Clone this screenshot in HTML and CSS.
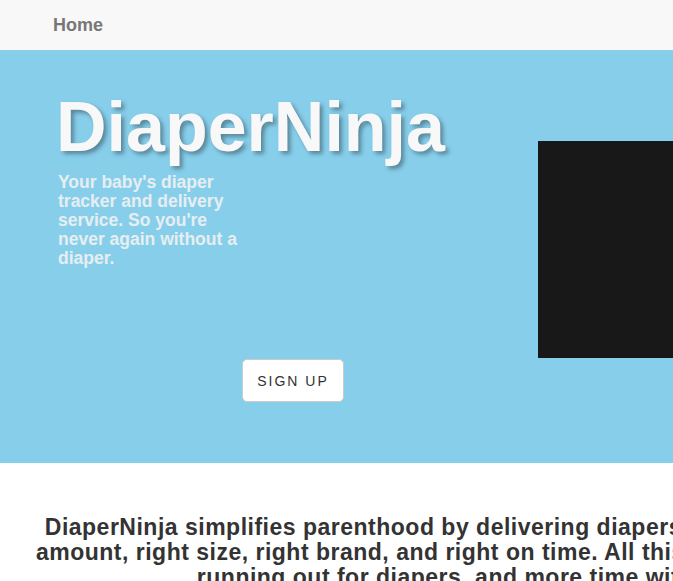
FILE: index.html
```html
<!DOCTYPE html>
<html lang="en">
<head>
<meta charset="utf-8">
<title>DiaperNinja</title>
<link rel="stylesheet" href="styles.css">
</head>
<body>
<nav class="navbar">
  <a class="brand" href="#">Home</a>
</nav>
<header class="hero">
  <div class="hero-text">
    <h1 class="title">DiaperNinja</h1>
    <p class="tagline">Your baby's diaper tracker and delivery service. So you're never again without a diaper.</p>
    <a class="btn" href="#">SIGN UP</a>
  </div>
  <div class="hero-media"></div>
</header>
<section class="intro">
  <p class="intro-text">DiaperNinja simplifies parenthood by delivering diapers to your home in the right<br>amount, right size, right brand, and right on time. All this ensures less time wasted<br>running out for diapers, and more time with your baby.</p>
</section>
</body>
</html>
```
FILE: styles.css
```css
html, body {
  margin: 0;
  padding: 0;
}
body {
  font-family: "Liberation Sans", Arial, Helvetica, sans-serif;
  background: #ffffff;
  overflow-x: hidden;
  width: 673px;
}
.navbar {
  height: 50px;
  background: #f8f8f8;
  display: flex;
  align-items: center;
  padding-left: 53px;
}
.brand {
  color: #777777;
  font-weight: bold;
  font-size: 18px;
  text-decoration: none;
}
.hero {
  background: #87ceeb;
  height: 413px;
  display: flex;
  overflow: hidden;
}
.hero-text {
  flex: none;
  width: 538px;
  box-sizing: border-box;
  padding-left: 56px;
  padding-top: 37px;
  display: flex;
  flex-direction: column;
  align-items: flex-start;
}
.title {
  margin: 0;
  font-size: 70px;
  line-height: 80px;
  color: #f8f8f8;
  font-weight: bold;
  text-shadow: 3px 3px 4px rgba(0, 0, 0, 0.35);
}
.tagline {
  margin: 6px 0 0 2px;
  width: 190px;
  font-size: 17.5px;
  line-height: 19px;
  font-weight: bold;
  color: #e6eef1;
}
.btn {
  margin-top: 91px;
  margin-left: 186px;
  width: 102px;
  height: 43px;
  box-sizing: border-box;
  background: #ffffff;
  border: 1px solid #cccccc;
  border-radius: 5px;
  display: flex;
  align-items: center;
  justify-content: center;
  color: #333333;
  font-size: 14px;
  letter-spacing: 2px;
  text-decoration: none;
}
.hero-media {
  flex: none;
  width: 400px;
  height: 217px;
  margin-top: 91px;
  background: #181818;
}
.intro {
  width: 1017px;
  padding-top: 52px;
}
.intro-text {
  margin: 0;
  text-align: center;
  font-size: 23px;
  line-height: 25px;
  letter-spacing: 0.5px;
  font-weight: bold;
  color: #333333;
  white-space: nowrap;
}
```
